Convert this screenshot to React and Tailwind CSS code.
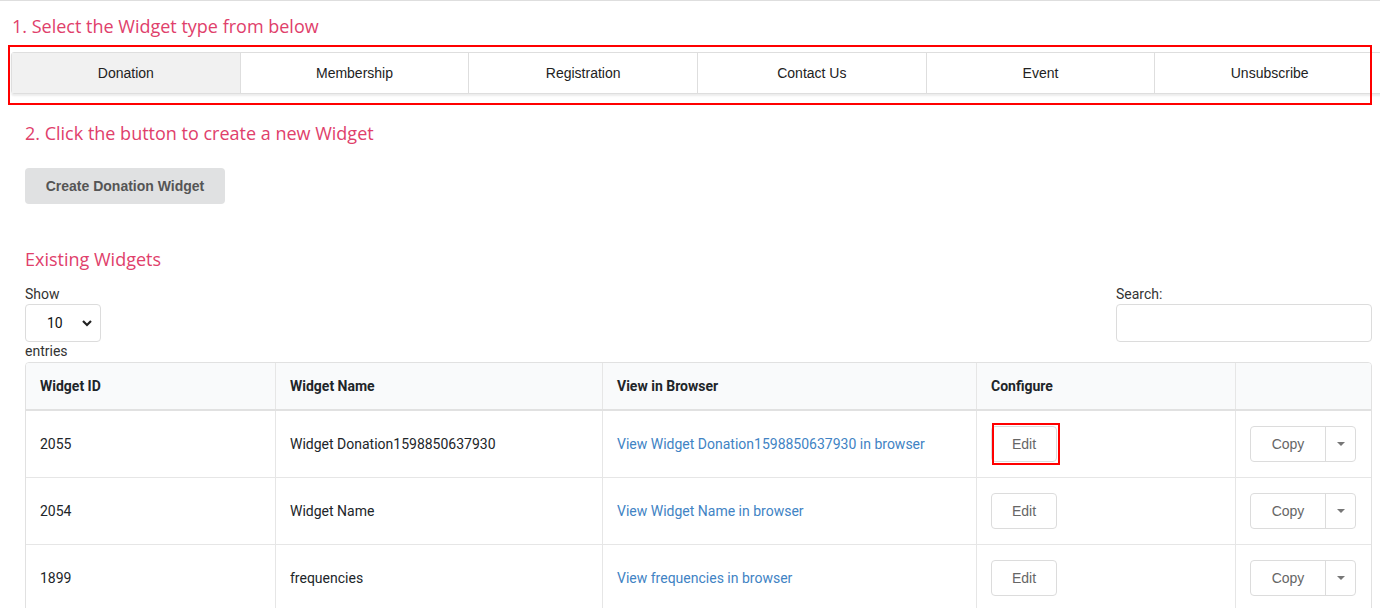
import React from 'react';

const widgetTypes = ['Donation', 'Membership', 'Registration', 'Contact Us', 'Event', 'Unsubscribe'];

const widgets = [
  { id: '2055', name: 'Widget Donation1598850637930' },
  { id: '2054', name: 'Widget Name' },
  { id: '1899', name: 'frequencies' },
];

const heading = "font-['Open_Sans',sans-serif] text-[18px] leading-[24px] text-[#e0406b]";

const CopyButton = () => (
  <div className="flex h-[36px] w-[106px] rounded-[4px] border border-[#dcdcdc] bg-white font-['Liberation_Sans',Arial,sans-serif] text-[14px] text-[#666]">
    <div className="flex flex-1 items-center justify-center">Copy</div>
    <div className="flex w-[30px] items-center justify-center border-l border-[#dcdcdc]">
      <svg width="8" height="4" viewBox="0 0 8 4">
        <path d="M0 0h8L4 4z" fill="#777" />
      </svg>
    </div>
  </div>
);

export default function App() {
  return (
    <div className="relative h-[608px] w-full overflow-hidden border-t border-[#dedede] bg-white">
      {/* step 1 */}
      <div className={`${heading} ml-[12px] pt-[13px]`}>1. Select the Widget type from below</div>

      <div className="ml-[11px] mt-[14px] grid w-[1374px] grid-cols-6 rounded-[3px] border border-[#dedede] shadow-[0_2px_2px_rgba(0,0,0,0.08)] font-['Liberation_Sans',Arial,sans-serif] text-[14px] text-[#222]">
        {widgetTypes.map((t, i) => (
          <div
            key={t}
            className={`flex h-[40px] items-center justify-center ${i < 5 ? 'border-r border-[#dedede]' : ''} ${i === 0 ? 'bg-[#f1f1f1]' : 'bg-white'}`}
          >
            {t}
          </div>
        ))}
      </div>

      {/* step 2 */}
      <div className="px-[25px]">
        <div className={`${heading} mt-[27px]`}>2. Click the button to create a new Widget</div>
        <button className="mt-[23px] h-[36px] w-[200px] rounded-[4px] bg-[#e0e1e2] font-['Liberation_Sans',Arial,sans-serif] text-[14px] font-bold text-[#555]">
          Create Donation Widget
        </button>

        <div className={`${heading} mt-[43px]`}>Existing Widgets</div>

        {/* datatable controls */}
        <div className="mt-[13px] flex w-[1347px] justify-between font-['Roboto',sans-serif] text-[14px] text-[#333]">
          <div>
            <div className="leading-[20px]">Show</div>
            <div className="flex h-[38px] w-[76px] items-center rounded-[4px] border border-[#dcdcdc] pl-[21px] pr-[4px] text-[#111]">
              <span className="flex-1">10</span>
              <svg width="16" height="16" viewBox="0 0 16 16" className="mr-[1px]">
                <path d="M4 6l4 4 4-4" fill="none" stroke="#222" strokeWidth="2.2" />
              </svg>
            </div>
            <div className="leading-[18px]">entries</div>
          </div>
          <div>
            <div className="leading-[20px]">Search:</div>
            <div className="h-[38px] w-[256px] rounded-[4px] border border-[#dcdcdc]" />
          </div>
        </div>

        {/* widgets table */}
        <div className="mt-[2px] w-[1347px] overflow-hidden rounded-t-[4px] border border-[#e1e1e1] font-['Roboto',sans-serif] text-[14px] text-[#212529]">
          <div className="grid h-[48px] grid-cols-[250px_327px_374px_259px_1fr] border-b-2 border-[#e1e1e1] bg-[#f9fafb] font-bold">
            {['Widget ID', 'Widget Name', 'View in Browser', 'Configure', ''].map((h, i) => (
              <div key={i} className={`flex items-center pl-[14px] ${i < 4 ? 'border-r border-[#e6e6e6]' : ''}`}>
                {h}
              </div>
            ))}
          </div>
          {widgets.map((w) => (
            <div key={w.id} className="grid h-[67px] grid-cols-[250px_327px_374px_259px_1fr] border-b border-[#e6e6e6]">
              <div className="flex items-center border-r border-[#e6e6e6] pl-[14px]">{w.id}</div>
              <div className="flex items-center border-r border-[#e6e6e6] pl-[14px]">{w.name}</div>
              <div className="flex items-center border-r border-[#e6e6e6] pl-[14px] text-[#4183c4]">
                View {w.name} in browser
              </div>
              <div className="flex items-center border-r border-[#e6e6e6] pl-[14px]">
                <button className="h-[36px] w-[66px] rounded-[4px] border border-[#dcdcdc] bg-white font-['Liberation_Sans',Arial,sans-serif] text-[14px] text-[#666]">
                  Edit
                </button>
              </div>
              <div className="flex items-center pl-[14px]">
                <CopyButton />
              </div>
            </div>
          ))}
        </div>
      </div>

      {/* highlight marks */}
      <div className="pointer-events-none absolute left-[8px] top-[44px] h-[60px] w-[1364px] border-2 border-[#f00]" />
      <div className="pointer-events-none absolute left-[992px] top-[422px] h-[42px] w-[68px] border-2 border-[#f00]" />
    </div>
  );
}
